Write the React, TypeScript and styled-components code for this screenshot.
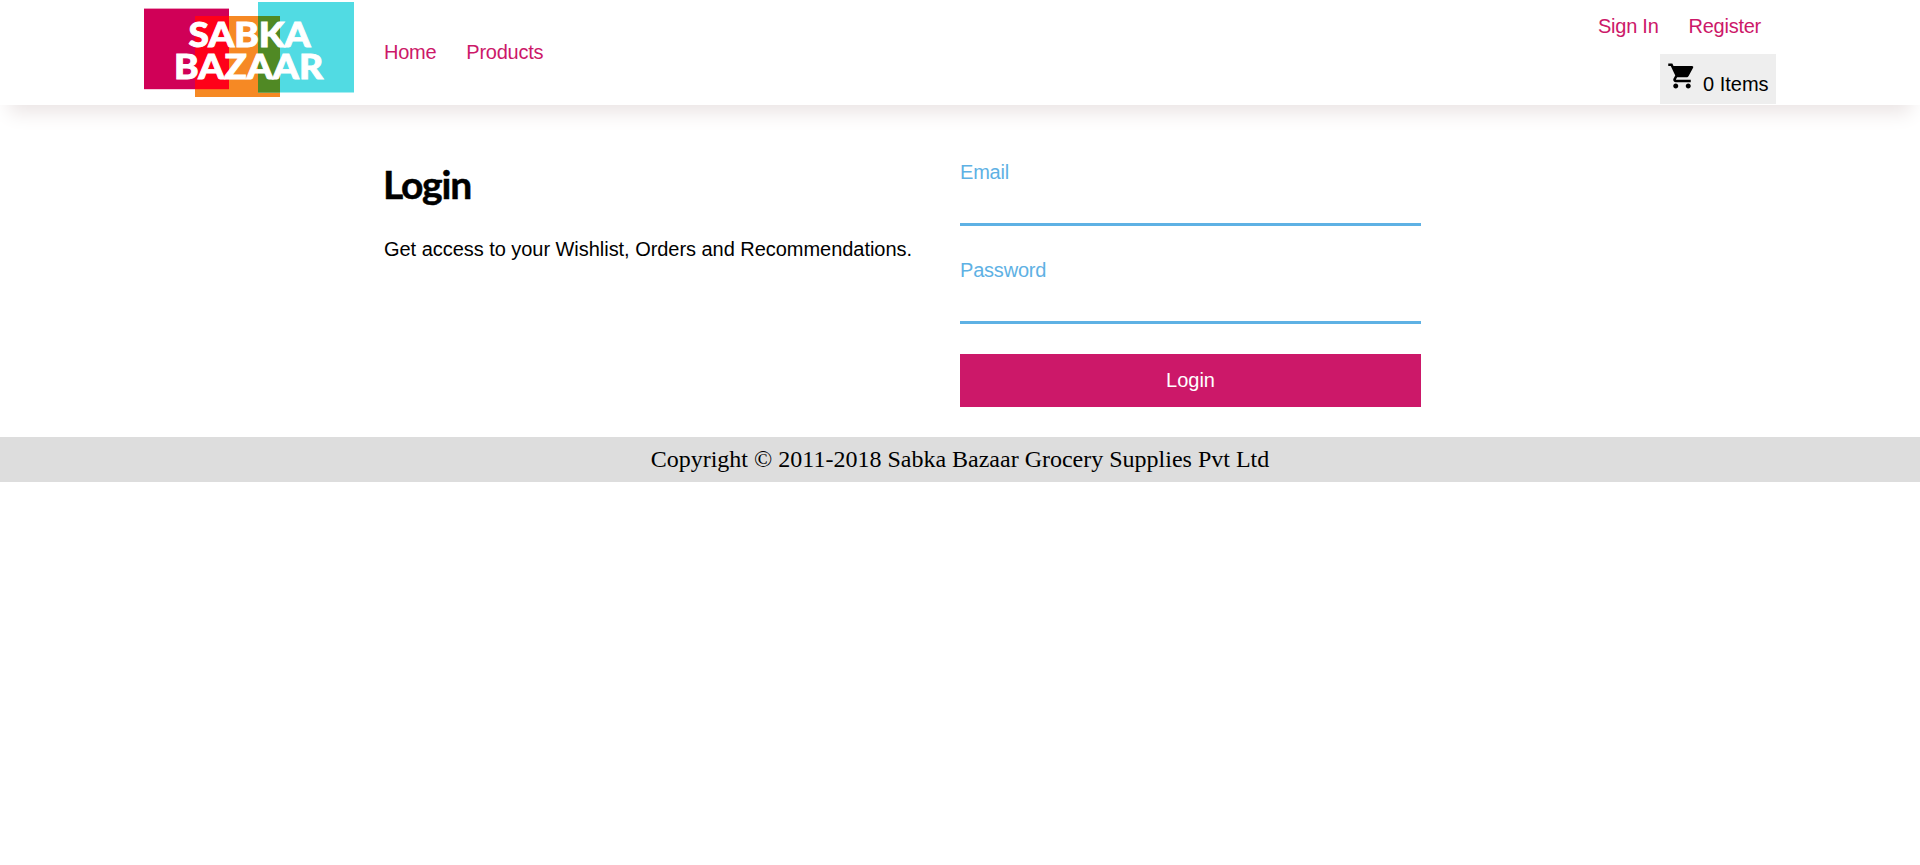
import React from "react";
import styled, { createGlobalStyle } from "styled-components";
import { MdShoppingCart } from "react-icons/md";

const GlobalStyle = createGlobalStyle`
  * { box-sizing: border-box; }
  body {
    margin: 0;
    background: #fff;
    color: #000;
    font: 20px/24px "Liberation Sans", Arial, sans-serif;
    letter-spacing: -0.04px;
  }
`;

const Header = styled.header`
  display: flex;
  height: 105px;
  padding: 0 144px;
  background: #fff;
  box-shadow: 0 17px 18px -9px #ebe5e5;
`;

const Logo = styled.svg`
  display: block;
  flex: none;
  width: 210px;
  height: 105px;
`;

const Nav = styled.nav`
  display: flex;
  align-items: center;
  gap: 30px;
  margin-left: 30px;
  padding-bottom: 1px;
`;

const NavLink = styled.a`
  color: #cc1869;
  text-decoration: none;
  letter-spacing: -0.25px;
`;

const Account = styled.div`
  display: flex;
  flex-direction: column;
  align-items: flex-end;
  margin-left: auto;
`;

const AccountLinks = styled.div`
  display: flex;
  gap: 30px;
  padding: 14px 15px 16px 0;
`;

const CartButton = styled.button`
  display: flex;
  align-items: flex-start;
  width: 116px;
  height: 50px;
  padding: 7px 7px 0;
  border: 0;
  background: #eee;
  color: #000;
  font: inherit;
  white-space: nowrap;

  svg { flex: none; width: 30px; height: 30px; }
`;

const CartCount = styled.span`
  margin: 11px 0 0 6px;
`;

const Main = styled.main`
  display: grid;
  grid-template-columns: 576px 461px;
  padding: 55px 0 30px 384px;
`;

const Title = styled.h1`
  margin: 0;
  font: 700 39px/48px "Comic Sans MS", Lato, sans-serif;
  letter-spacing: -1.2px;
  text-indent: -1px;
  -webkit-text-stroke: 0.5px #000;
`;

const Intro = styled.p`
  margin: 29px 0 0;
`;

const Form = styled.form`
  display: flex;
  flex-direction: column;
`;

const Field = styled.label`
  display: flex;
  flex-direction: column;
  height: 98px;
  color: #5eb1e4;
  letter-spacing: -0.2px;
`;

const Input = styled.input`
  width: 100%;
  height: 42px;
  margin: 0;
  padding: 6px 0;
  border: 0;
  border-bottom: 3px solid #5eb1e4;
  background: transparent;
  font: inherit;
  outline: none;
`;

const Submit = styled.button`
  height: 53px;
  margin-top: -2px;
  border: 0;
  padding: 0 0 1px;
  background: #cc1869;
  color: #fff;
  font: inherit;
`;

const Footer = styled.footer`
  height: 45px;
  background: #ddd;
  font: 24px/45px "Liberation Serif", "Times New Roman", serif;
  letter-spacing: 0;
  text-align: center;
`;

function BrandLogo() {
  return (
    <Logo viewBox="0 0 210 105" role="img" aria-label="Sabka Bazaar">
      <rect x="0" y="8.6" width="85" height="80.6" fill="#d00057" />
      <rect x="51" y="16" width="85" height="81" fill="#f68924" />
      <rect x="114" y="2" width="96" height="90.5" fill="#51dbe3" />
      <rect x="51" y="16" width="34" height="73.2" fill="#ff0019" />
      <rect x="114" y="16" width="22" height="76.5" fill="#508924" />
      <g fill="#fff" stroke="#fff" strokeWidth="0.9" fontFamily="Lato, sans-serif" fontWeight="900" fontSize="34">
        <text x="44.5" y="46.7" textLength="122" lengthAdjust="spacingAndGlyphs">SABKA</text>
        <text x="30" y="78.7" textLength="149" lengthAdjust="spacingAndGlyphs">BAZAAR</text>
      </g>
    </Logo>
  );
}

export default function App() {
  return (
    <>
      <GlobalStyle />
      <Header>
        <BrandLogo />
        <Nav>
          <NavLink>Home</NavLink>
          <NavLink>Products</NavLink>
        </Nav>
        <Account>
          <AccountLinks>
            <NavLink>Sign In</NavLink>
            <NavLink>Register</NavLink>
          </AccountLinks>
          <CartButton type="button">
            <MdShoppingCart />
            <CartCount>0 Items</CartCount>
          </CartButton>
        </Account>
      </Header>
      <Main>
        <section>
          <Title>Login</Title>
          <Intro>Get access to your Wishlist, Orders and Recommendations.</Intro>
        </section>
        <Form>
          <Field>
            Email
            <Input type="email" />
          </Field>
          <Field>
            Password
            <Input type="password" />
          </Field>
          <Submit type="button">Login</Submit>
        </Form>
      </Main>
      <Footer>Copyright © 2011-2018 Sabka Bazaar Grocery Supplies Pvt Ltd</Footer>
    </>
  );
}
